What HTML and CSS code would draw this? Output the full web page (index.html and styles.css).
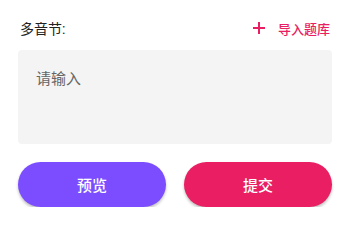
FILE: index.html
```html
<!DOCTYPE html>
<html lang="zh">
<head>
<meta charset="utf-8">
<link rel="stylesheet" href="styles.css">
</head>
<body>
<div class="page">
  <div class="header">
    <span class="label">多音节:</span>
    <a class="import">
      <svg class="plus" width="12" height="12" viewBox="0 0 12 12"><path d="M6 0V12M0 6H12" stroke="#e91e63" stroke-width="2"/></svg>
      <span>导入题库</span>
    </a>
  </div>
  <div class="input">请输入</div>
  <div class="actions">
    <button class="btn preview">预览</button>
    <button class="btn submit">提交</button>
  </div>
</div>
</body>
</html>
```
FILE: styles.css
```css
html, body { margin: 0; padding: 0; background: #fff; }
body { font-family: Roboto, "Noto Sans CJK SC", sans-serif; }
.page { padding: 18px 18px 0; }
.header { display: flex; justify-content: space-between; align-items: center; height: 20px; margin-bottom: 12px; }
.label { font-size: 14px; color: #222; padding-left: 2px; }
.import { display: flex; align-items: center; gap: 13px; color: #e91e63; font-size: 13px; font-weight: 500; padding-right: 2px; }
.plus { display: block; }
.input { height: 94px; box-sizing: border-box; background: #f4f4f4; border-radius: 4px; padding: 19px 18px; font-size: 15px; line-height: 20px; color: #666; }
.actions { display: flex; gap: 18px; margin-top: 18px; }
.btn { flex: 1; height: 45px; border: none; border-radius: 23px; color: #fff; font-family: inherit; font-size: 15px; font-weight: 500; box-shadow: 0 2px 3px rgba(0,0,0,0.25); }
.preview { background: #7c4dff; }
.submit { background: #e91e63; }
```
